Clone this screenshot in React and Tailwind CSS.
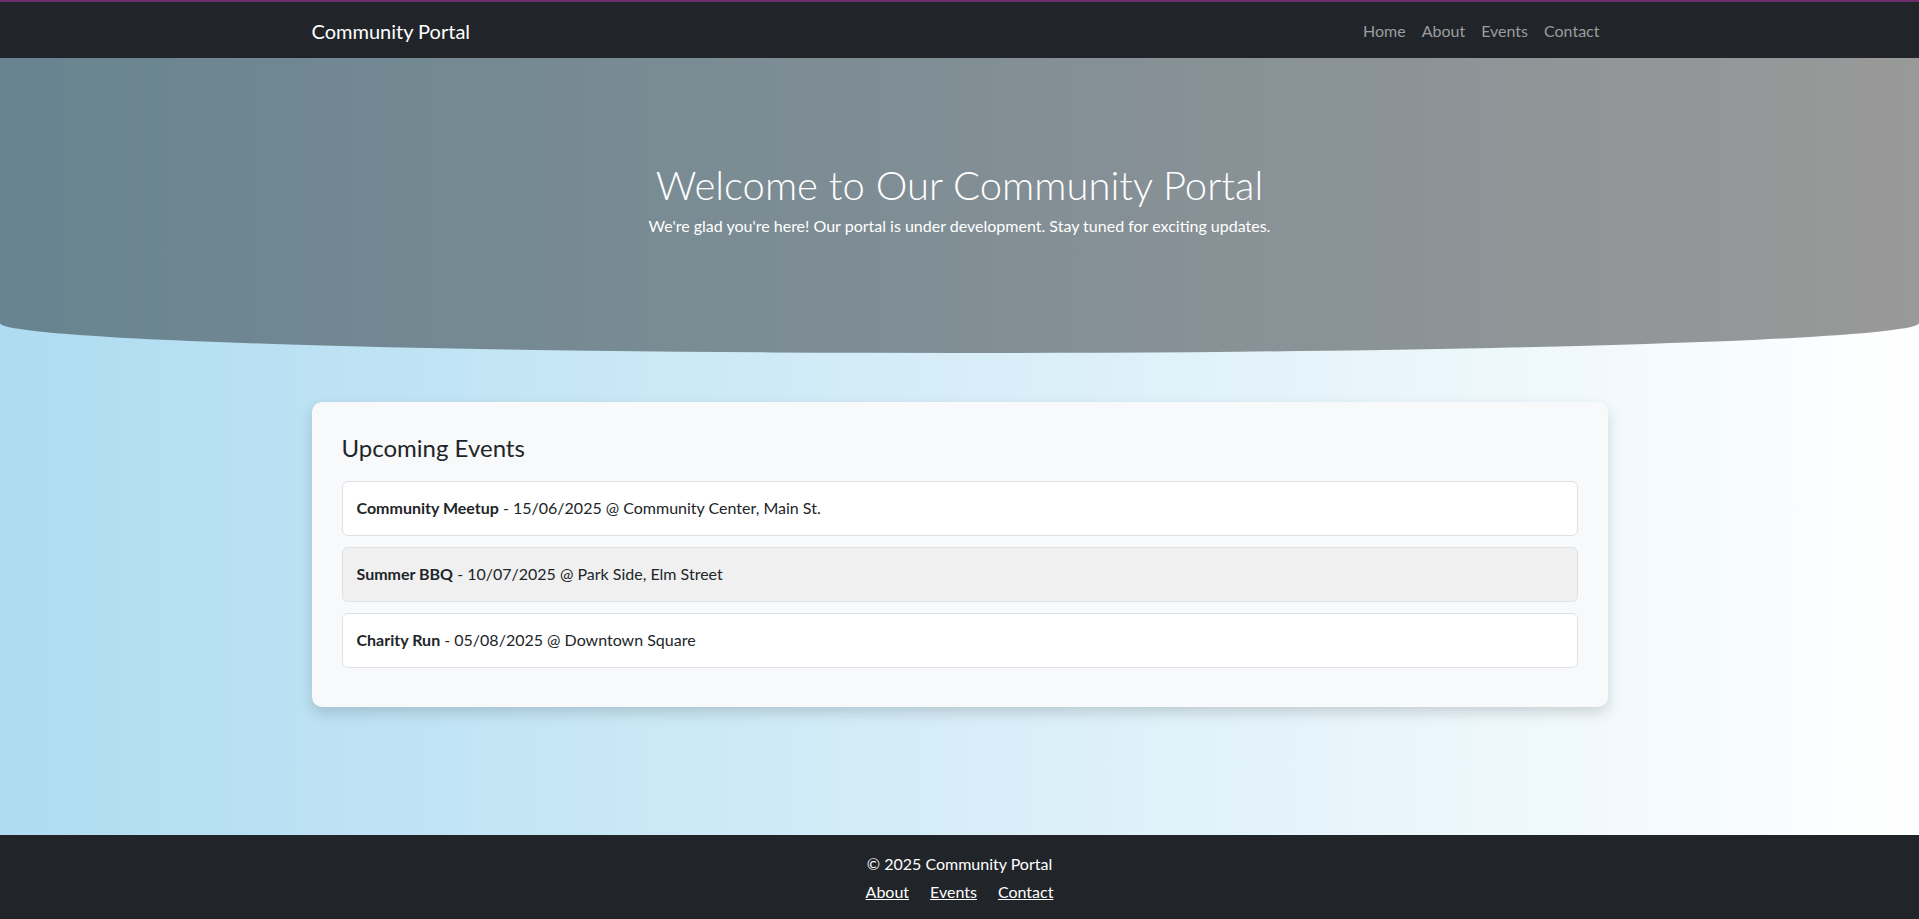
// App.jsx
// Community portal landing page: navbar, curved hero, upcoming events card, footer.

import React from 'react';

const events = [
  { id: 1, name: 'Community Meetup', date: '15/06/2025', place: 'Community Center, Main St.' },
  { id: 2, name: 'Summer BBQ', date: '10/07/2025', place: 'Park Side, Elm Street' },
  { id: 3, name: 'Charity Run', date: '05/08/2025', place: 'Downtown Square' },
];

const navLinks = ['Home', 'About', 'Events', 'Contact'];

const App = () => {
  return (
    <div className="min-h-screen flex flex-col bg-gradient-to-r from-[#aedcf1] to-white font-['Lato','Noto_Sans',sans-serif] text-[#212529]">
      {/* Navbar */}
      <nav className="border-t-2 border-[#6c2d6c] bg-[#212529]">
        <div className="max-w-[1320px] mx-auto px-3 h-14 pt-[2px] flex items-center justify-between">
          <a href="#" className="text-white text-[20px]">Community Portal</a>
          <ul className="flex">
            {navLinks.map((link) => (
              <li key={link}>
                <a href="#" className="px-2 text-[#9b9d9f] text-[16px]">{link}</a>
              </li>
            ))}
          </ul>
        </div>
      </nav>

      {/* Hero */}
      <header className="h-[295px] bg-black/40 rounded-bl-[50%_30px] rounded-br-[50%_30px] text-white text-center pt-[103px]">
        <h1 className="text-[40px] leading-[1.2] font-light mb-[5px]">Welcome to Our Community Portal</h1>
        <p className="text-[16px] leading-6">
          We're glad you're here! Our portal is under development. Stay tuned for exciting updates.
        </p>
      </header>

      {/* Main content */}
      <main className="flex-1 pt-[49px] pb-[128px]">
        <div className="max-w-[1320px] mx-auto px-3">
          <section className="bg-[#f8f9fa] rounded-[10px] shadow-[0_6px_14px_rgba(0,0,0,0.15)] px-[30px] pt-8 pb-[39px]">
            <h2 className="text-[24px] leading-[1.2] mb-[18px]">Upcoming Events</h2>
            <ul className="flex flex-col gap-[11px]">
              {events.map((event, i) => (
                <li
                  key={event.id}
                  className={`border border-[#dee2e6] rounded-[6px] px-[14px] py-[14.5px] text-[16px] leading-6 ${
                    i === 1 ? 'bg-[#f0f0f0]' : 'bg-white'
                  }`}
                >
                  <strong className="font-bold">{event.name}</strong> - {event.date} @ {event.place}
                </li>
              ))}
            </ul>
          </section>
        </div>
      </main>

      {/* Footer */}
      <footer className="bg-[#212529] text-white text-center text-[16px] leading-6 pt-[17px] pb-[18px]">
        <p className="mb-1">© 2025 Community Portal</p>
        <div className="flex justify-center gap-[21px]">
          <a href="#" className="underline">About</a>
          <a href="#" className="underline">Events</a>
          <a href="#" className="underline">Contact</a>
        </div>
      </footer>
    </div>
  );
};

export default App;
